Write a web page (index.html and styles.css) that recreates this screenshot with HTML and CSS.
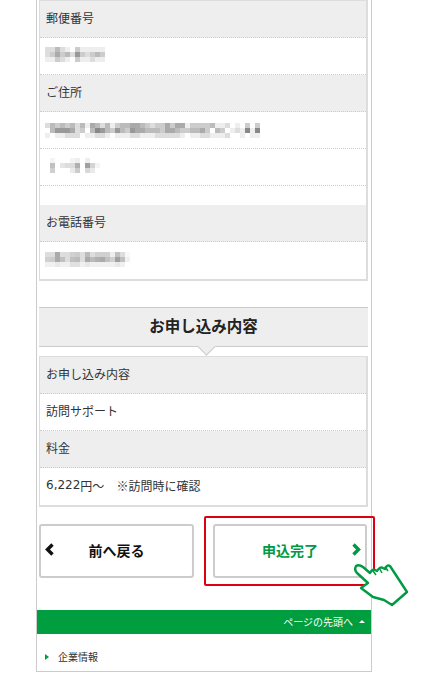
FILE: index.html
```html
<!DOCTYPE html>
<html lang="ja">
<head>
<meta charset="utf-8">
<title>お申し込み内容</title>
<link rel="stylesheet" href="styles.css">
</head>
<body>
<div class="page">
  <div class="tbl">
    <div class="row head">郵便番号</div>
    <div class="row m9">
      <svg class="mosaic" width="60" height="15" viewBox="0 0 60 15">
        <g><rect x="0" fill="#ddd"/><rect x="5" fill="#ddd"/><rect x="10" fill="#bbb"/><rect x="15" fill="#ddd"/><rect x="20" fill="#eee"/><rect x="30" fill="#ccc"/><rect x="35" fill="#eee"/><rect x="40" fill="#eee"/><rect x="45" fill="#eee"/><rect x="50" fill="#eee"/><rect x="55" fill="#eee"/></g>
        <g transform="translate(0 5)"><rect x="0" fill="#ddd"/><rect x="5" fill="#ccc"/><rect x="10" fill="#aaa"/><rect x="15" fill="#ccc"/><rect x="20" fill="#bbb"/><rect x="25" fill="#ddd"/><rect x="30" fill="#999"/><rect x="35" fill="#ccc"/><rect x="40" fill="#ddd"/><rect x="45" fill="#ccc"/><rect x="50" fill="#bbb"/><rect x="55" fill="#ccc"/></g>
        <g transform="translate(0 10)"><rect x="0" fill="#eee"/><rect x="5" fill="#eee"/><rect x="10" fill="#ccc"/><rect x="15" fill="#ddd"/><rect x="20" fill="#eee"/><rect x="30" fill="#ccc"/><rect x="35" fill="#eee"/><rect x="40" fill="#eee"/><rect x="45" fill="#ddd"/><rect x="50" fill="#eee"/><rect x="55" fill="#eee"/></g>
      </svg>
    </div>
    <div class="row head">ご住所</div>
    <div class="row m11">
      <svg class="mosaic" width="215" height="15" viewBox="0 0 215 15">
        <g><rect x="0" fill="#ddd"/><rect x="5" fill="#bbb"/><rect x="10" fill="#ccc"/><rect x="15" fill="#bbb"/><rect x="20" fill="#ccc"/><rect x="25" fill="#bbb"/><rect x="30" fill="#ddd"/><rect x="35" fill="#bbb"/><rect x="40" fill="#eee"/><rect x="45" fill="#aaa"/><rect x="50" fill="#bbb"/><rect x="55" fill="#ddd"/><rect x="60" fill="#bbb"/><rect x="65" fill="#eee"/><rect x="70" fill="#ccc"/><rect x="75" fill="#bbb"/><rect x="80" fill="#bbb"/><rect x="85" fill="#aaa"/><rect x="90" fill="#aaa"/><rect x="95" fill="#bbb"/><rect x="100" fill="#ccc"/><rect x="105" fill="#ddd"/><rect x="110" fill="#ccc"/><rect x="115" fill="#ccc"/><rect x="120" fill="#aaa"/><rect x="125" fill="#ccc"/><rect x="130" fill="#aaa"/><rect x="135" fill="#aaa"/><rect x="140" fill="#eee"/><rect x="145" fill="#ccc"/><rect x="150" fill="#ccc"/><rect x="155" fill="#ccc"/><rect x="160" fill="#ccc"/><rect x="165" fill="#bbb"/><rect x="170" fill="#eee"/><rect x="175" fill="#eee"/><rect x="180" fill="#ddd"/><rect x="190" fill="#eee"/><rect x="200" fill="#ccc"/><rect x="210" fill="#ccc"/></g>
        <g transform="translate(0 5)"><rect x="5" fill="#bbb"/><rect x="10" fill="#999"/><rect x="15" fill="#999"/><rect x="20" fill="#999"/><rect x="25" fill="#aaa"/><rect x="30" fill="#ddd"/><rect x="35" fill="#ccc"/><rect x="45" fill="#bbb"/><rect x="50" fill="#888"/><rect x="55" fill="#999"/><rect x="60" fill="#bbb"/><rect x="65" fill="#ccc"/><rect x="70" fill="#999"/><rect x="75" fill="#bbb"/><rect x="80" fill="#ccc"/><rect x="85" fill="#999"/><rect x="90" fill="#aaa"/><rect x="95" fill="#aaa"/><rect x="100" fill="#bbb"/><rect x="105" fill="#bbb"/><rect x="110" fill="#bbb"/><rect x="115" fill="#ccc"/><rect x="120" fill="#aaa"/><rect x="125" fill="#aaa"/><rect x="130" fill="#bbb"/><rect x="135" fill="#ccc"/><rect x="140" fill="#ccc"/><rect x="145" fill="#bbb"/><rect x="150" fill="#bbb"/><rect x="155" fill="#aaa"/><rect x="160" fill="#ccc"/><rect x="170" fill="#bbb"/><rect x="175" fill="#ccc"/><rect x="185" fill="#eee"/><rect x="190" fill="#ddd"/><rect x="195" fill="#eee"/><rect x="200" fill="#888"/><rect x="205" fill="#eee"/><rect x="210" fill="#888"/></g>
        <g transform="translate(0 10)"><rect x="0" fill="#eee"/><rect x="10" fill="#eee"/><rect x="15" fill="#eee"/><rect x="20" fill="#ddd"/><rect x="25" fill="#ddd"/><rect x="30" fill="#ddd"/><rect x="40" fill="#eee"/><rect x="45" fill="#eee"/><rect x="50" fill="#ddd"/><rect x="55" fill="#ddd"/><rect x="60" fill="#eee"/><rect x="70" fill="#eee"/><rect x="75" fill="#eee"/><rect x="80" fill="#eee"/><rect x="85" fill="#ddd"/><rect x="90" fill="#ddd"/><rect x="95" fill="#eee"/><rect x="100" fill="#eee"/><rect x="105" fill="#eee"/><rect x="110" fill="#ddd"/><rect x="115" fill="#ddd"/><rect x="120" fill="#ddd"/><rect x="125" fill="#ddd"/><rect x="130" fill="#ddd"/><rect x="135" fill="#eee"/><rect x="145" fill="#eee"/><rect x="150" fill="#eee"/><rect x="155" fill="#ddd"/><rect x="160" fill="#ddd"/><rect x="165" fill="#eee"/><rect x="170" fill="#eee"/><rect x="175" fill="#eee"/><rect x="180" fill="#ddd"/><rect x="195" fill="#eee"/><rect x="205" fill="#eee"/><rect x="210" fill="#eee"/></g>
      </svg>
    </div>
    <div class="row m9">
      <svg class="mosaic" width="55" height="15" viewBox="0 0 55 15">
        <g><rect x="5" fill="#f4f4f4"/><rect x="25" fill="#f4f4f4"/><rect x="30" fill="#eee"/><rect x="40" fill="#eee"/></g>
        <g transform="translate(0 5)"><rect x="5" fill="#c0c0c0"/><rect x="15" fill="#e4e4e4"/><rect x="20" fill="#ddd"/><rect x="25" fill="#ddd"/><rect x="30" fill="#b0b0b0"/><rect x="40" fill="#a0a0a0"/><rect x="45" fill="#d4d4d4"/><rect x="50" fill="#f4f4f4"/></g>
        <g transform="translate(0 10)"><rect x="5" fill="#d0d0d0"/><rect x="25" fill="#eaeaea"/><rect x="30" fill="#ccc"/><rect x="40" fill="#d8d8d8"/><rect x="45" fill="#eaeaea"/></g>
      </svg>
    </div>
    <div class="row blank"></div>
    <div class="row head">お電話番号</div>
    <div class="row m10">
      <svg class="mosaic" width="85" height="15" viewBox="0 0 85 15">
        <g><rect x="0" fill="#ddd"/><rect x="5" fill="#ddd"/><rect x="10" fill="#aaa"/><rect x="15" fill="#ddd"/><rect x="20" fill="#ddd"/><rect x="25" fill="#d0d0d0"/><rect x="30" fill="#ccc"/><rect x="35" fill="#ddd"/><rect x="40" fill="#bbb"/><rect x="45" fill="#ddd"/><rect x="50" fill="#d0d0d0"/><rect x="55" fill="#d0d0d0"/><rect x="60" fill="#d0d0d0"/><rect x="65" fill="#eee"/><rect x="70" fill="#c0c0c0"/><rect x="75" fill="#ddd"/><rect x="80" fill="#f8f8f8"/></g>
        <g transform="translate(0 5)"><rect x="0" fill="#d0d0d0"/><rect x="5" fill="#ccc"/><rect x="10" fill="#aaa"/><rect x="15" fill="#c0c0c0"/><rect x="20" fill="#ddd"/><rect x="25" fill="#c0c0c0"/><rect x="30" fill="#bbb"/><rect x="35" fill="#ddd"/><rect x="40" fill="#aaa"/><rect x="45" fill="#bbb"/><rect x="50" fill="#b0b0b0"/><rect x="55" fill="#aaa"/><rect x="60" fill="#c0c0c0"/><rect x="65" fill="#d0d0d0"/><rect x="70" fill="#a0a0a0"/><rect x="75" fill="#c0c0c0"/><rect x="80" fill="#f0f0f0"/></g>
        <g transform="translate(0 10)"><rect x="0" fill="#f0f0f0"/><rect x="5" fill="#f0f0f0"/><rect x="10" fill="#e8e8e8"/><rect x="15" fill="#f0f0f0"/><rect x="20" fill="#f0f0f0"/><rect x="25" fill="#e0e0e0"/><rect x="30" fill="#e0e0e0"/><rect x="35" fill="#f0f0f0"/><rect x="40" fill="#e8e8e8"/><rect x="45" fill="#f0f0f0"/><rect x="50" fill="#f0f0f0"/><rect x="55" fill="#f0f0f0"/><rect x="60" fill="#f0f0f0"/><rect x="65" fill="#f0f0f0"/><rect x="70" fill="#e8e8e8"/><rect x="75" fill="#f0f0f0"/></g>
      </svg>
    </div>
  </div>

  <h2 class="heading">お申し込み内容</h2>

  <div class="tbl tbl-second">
    <div class="row head">お申し込み内容</div>
    <div class="row">訪問サポート</div>
    <div class="row head">料金</div>
    <div class="row"><span class="num">6,222</span>円〜<span class="note">※訪問時に確認</span></div>
  </div>

  <div class="actions">
    <a class="btn btn-back">
      <svg class="chev chev-left" width="9" height="13" viewBox="0 0 9 13"><path d="M7.500 1.500 2.500 6.500l5 5"/></svg>
      前へ戻る
    </a>
    <a class="btn btn-next">
      申込完了
      <svg class="chev chev-right" width="9" height="13" viewBox="0 0 9 13"><path d="M1.500 1.500l5 5-5 5"/></svg>
      <span class="highlight"></span>
      <svg class="hand" width="75" height="70" viewBox="0 0 75 70">
        <path class="hand-body" d="M16 26Q19 24 23 27L30 33Q32 29 35 30L37 31Q40 26 43 28L45 29Q47 24 50 26L67 52 52 65 44 60 33 57 21 48 28 43 17 33Q14 30 16 26Z"/>
        <path class="hand-line" d="M33 31l3 4M39.500 28.500l2.500 4.500M45 26.500l3 4.500"/>
      </svg>
    </a>
  </div>

  <div class="totop">ページの先頭へ<span class="totop-arrow"></span></div>
  <div class="foot"><span class="foot-arrow"></span>企業情報</div>
</div>
</body>
</html>
```

FILE: styles.css
```css
* {
  box-sizing: border-box;
}

html,
body {
  margin: 0;
  padding: 0;
  background: #fff;
}

body {
  height: 673px;
  overflow: hidden;
  font-family: "Noto Sans CJK JP", "Noto Sans", sans-serif;
  font-size: 12px;
  color: #333;
}

.page {
  width: 336px;
  height: 672px;
  margin-left: 36px;
  border: 1px solid #ccc;
  border-top: 0;
}

.tbl {
  width: 329px;
  margin-left: 2px;
  border: 1px solid #ddd;
  border-width: 1px 2px 2px 1px;
}

.row {
  display: flex;
  align-items: center;
  height: 37px;
  padding: 0 0 3px 6px;
  border-bottom: 1px dotted #ccc;
}

.row:last-child {
  border-bottom: 0;
}

.head {
  background: #eee;
}

.blank {
  height: 19px;
  border-bottom: 0;
}

.m9,
.m10,
.m11 {
  align-items: flex-start;
  padding-bottom: 0;
  padding-left: 5px;
}

.m9 {
  padding-top: 9px;
}

.m10 {
  padding-top: 10px;
}

.m11 {
  padding-top: 11px;
}

.mosaic {
  display: block;
  shape-rendering: crispEdges;
}

.mosaic rect {
  width: 5px;
  height: 5px;
}

.heading {
  position: relative;
  width: 329px;
  height: 40px;
  margin: 26px 0 0 2px;
  border-top: 1px solid #ccc;
  border-bottom: 1px solid #ccc;
  background: #eee;
  color: #222;
  font-size: 15.500px;
  font-weight: 700;
  line-height: 35px;
  text-align: center;
}

.heading::after {
  content: "";
  position: absolute;
  left: 161px;
  bottom: -7px;
  width: 12px;
  height: 12px;
  background: #eee;
  border-right: 1px solid #ccc;
  border-bottom: 1px solid #ccc;
  transform: rotate(45deg);
}

.tbl-second {
  margin-top: 9px;
}

.num {
  font-family: "DejaVu Sans", sans-serif;
}

.note {
  margin-left: 12px;
}

.actions {
  display: flex;
  gap: 19px;
  width: 329px;
  margin: 17px 0 0 2px;
}

.btn {
  position: relative;
  display: flex;
  align-items: center;
  justify-content: center;
  width: 155px;
  height: 54px;
  padding-bottom: 3px;
  border: 2px solid #ccc;
  border-radius: 3px;
  font-size: 14px;
  font-weight: 700;
  color: #111;
}

.btn-next {
  width: 154px;
  color: #009944;
}

.chev {
  position: absolute;
  top: 17px;
  fill: none;
  stroke-width: 3.400;
}

.chev-left {
  left: 4px;
  stroke: #111;
}

.chev-right {
  right: 4px;
  stroke: #009944;
}

.highlight {
  position: absolute;
  left: -11px;
  top: -10px;
  width: 171px;
  height: 70px;
  border: 2px solid #dc0012;
  border-radius: 2px;
}

.hand {
  position: absolute;
  left: 125px;
  top: 14px;
}

.hand-body {
  fill: #fff;
  stroke: #009944;
  stroke-width: 2.400;
  stroke-linejoin: round;
}

.hand-line {
  fill: none;
  stroke: #009944;
  stroke-width: 1.500;
}

.totop {
  display: flex;
  align-items: center;
  justify-content: flex-end;
  height: 24px;
  margin-top: 32px;
  padding: 0 6px 2px 0;
  background: #009e3f;
  color: #fff;
  font-size: 10px;
}

.totop-arrow {
  width: 0;
  height: 0;
  margin-left: 6px;
  border-left: 3px solid transparent;
  border-right: 3px solid transparent;
  border-bottom: 3px solid #fff;
}

.foot {
  display: flex;
  align-items: center;
  height: 37px;
  padding: 8px 0 0 8px;
  font-size: 10px;
}

.foot-arrow {
  width: 0;
  height: 0;
  margin-right: 9px;
  border-top: 3px solid transparent;
  border-bottom: 3px solid transparent;
  border-left: 4px solid #009e3f;
}
```
